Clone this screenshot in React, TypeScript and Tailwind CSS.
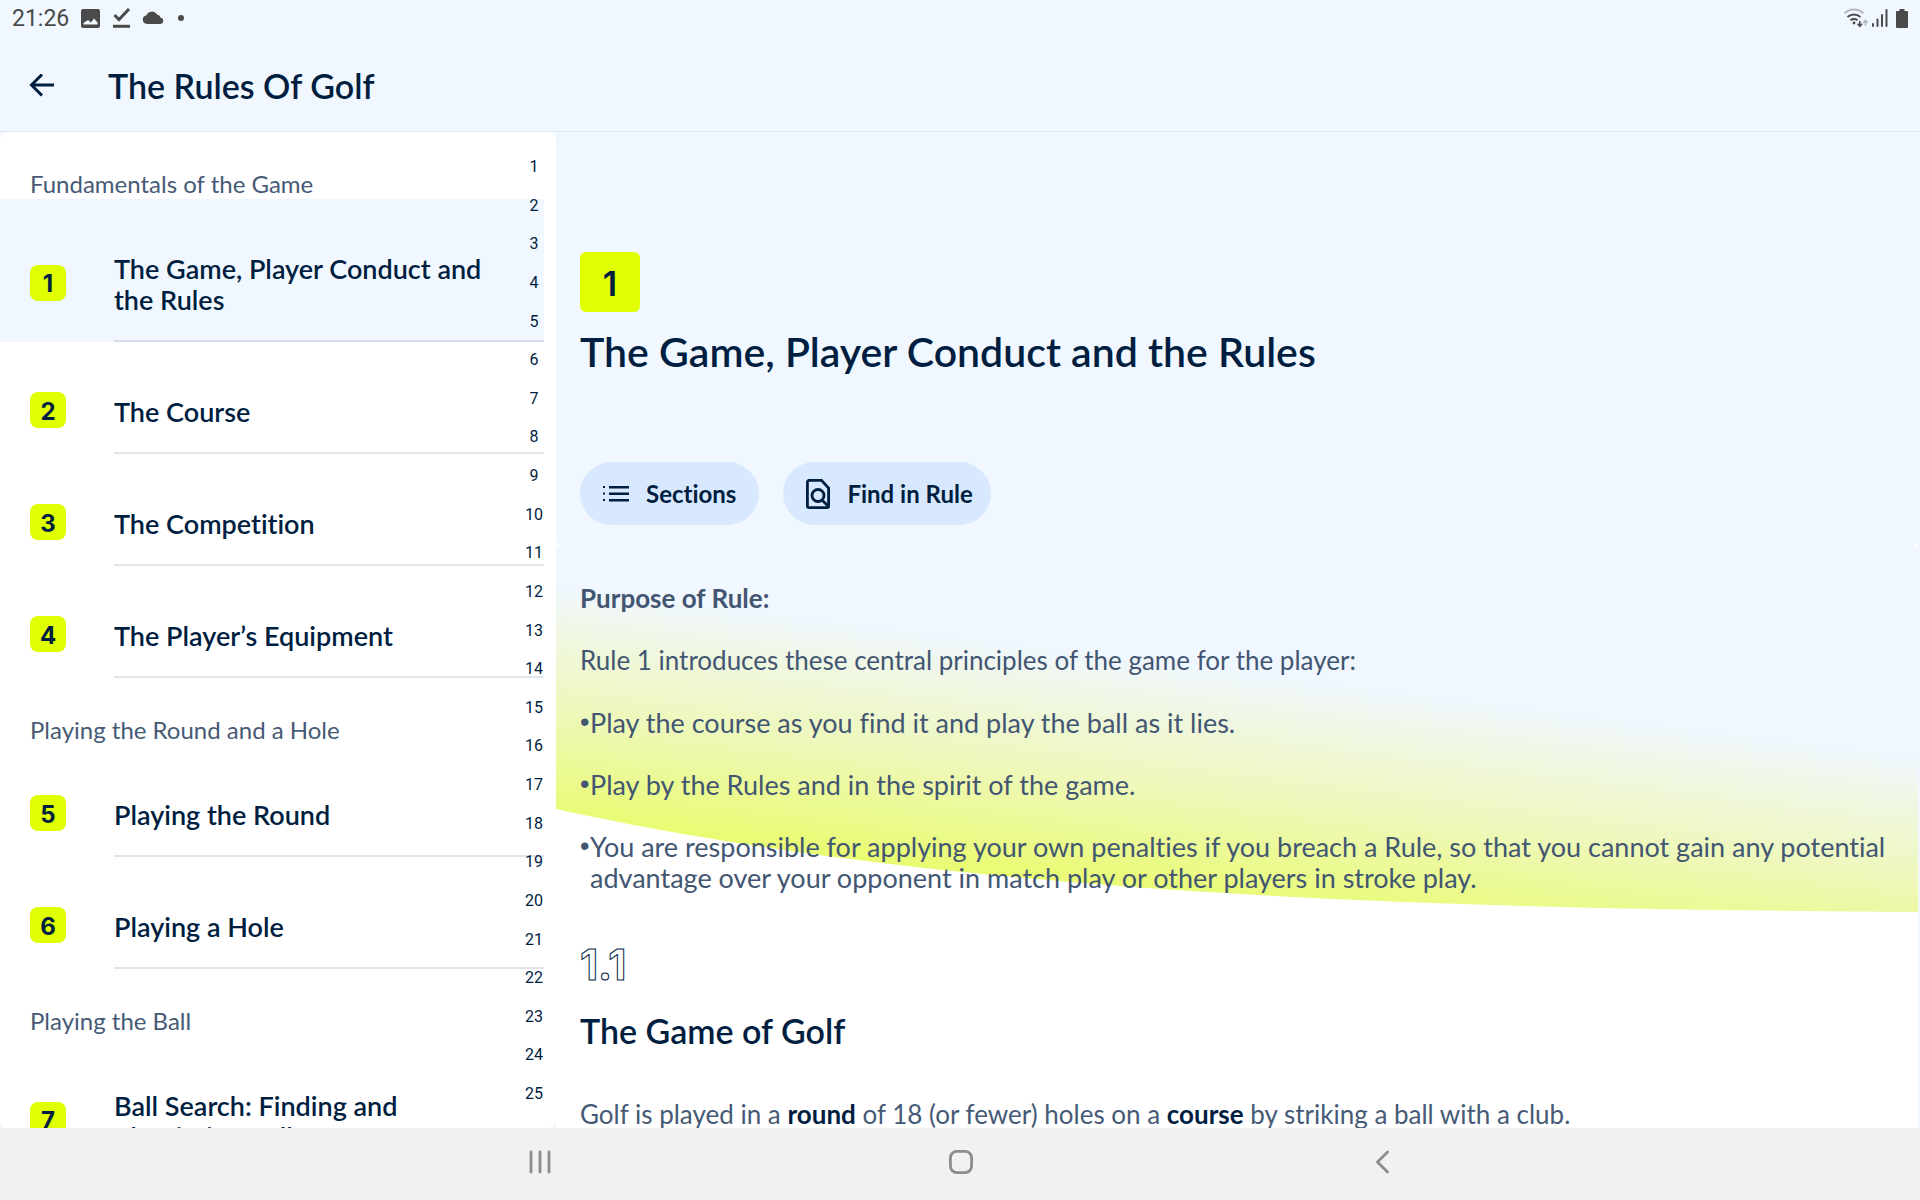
import React from 'react';

type Rule = { no: number; title: string };
type Group = { heading: string; rules: Rule[] };

const groups: Group[] = [
  {
    heading: 'Fundamentals of the Game',
    rules: [
      { no: 1, title: 'The Game, Player Conduct and the Rules' },
      { no: 2, title: 'The Course' },
      { no: 3, title: 'The Competition' },
      { no: 4, title: 'The Player’s Equipment' },
    ],
  },
  {
    heading: 'Playing the Round and a Hole',
    rules: [
      { no: 5, title: 'Playing the Round' },
      { no: 6, title: 'Playing a Hole' },
    ],
  },
  {
    heading: 'Playing the Ball',
    rules: [{ no: 7, title: 'Ball Search: Finding and Identifying Ball' }],
  },
];

const ruleNumbers = Array.from({ length: 25 }, (_, i) => i + 1);

const principles = [
  'Play the course as you find it and play the ball as it lies.',
  'Play by the Rules and in the spirit of the game.',
  'You are responsible for applying your own penalties if you breach a Rule, so that you cannot gain any potential advantage over your opponent in match play or other players in stroke play.',
];

const StatusBar: React.FC = () => (
  <div className="flex h-9 shrink-0 items-center justify-between px-3 text-[#4a4a4a]">
    <div className="flex items-center">
      <span className="pt-0.5 font-[Roboto,sans-serif] text-[23px] leading-7">21:26</span>
      <svg className="ml-3 h-[19px] w-[19px]" viewBox="0 0 19 19" fill="currentColor">
        <path fillRule="evenodd" d="M2 0h15a2 2 0 0 1 2 2v15a2 2 0 0 1-2 2H2a2 2 0 0 1-2-2V2a2 2 0 0 1 2-2Zm.5 15.500h14v-2l-3.500-4-3 4-3-2.500-4.500 3Z" />
      </svg>
      <svg className="ml-[13px] h-5 w-[18px]" viewBox="0 0 18 20" fill="none" stroke="currentColor">
        <path d="M1.500 7 6 11.500 16 1" strokeWidth="3" />
        <path d="M0 18.300h17" strokeWidth="3" />
      </svg>
      <svg className="ml-[11px] h-[14px] w-[22px]" viewBox="0 0 22 14" fill="currentColor">
        <path d="M5 13a4.300 4.300 0 0 1-.8-8.500A6.200 6.200 0 0 1 15.200 3.500 4.500 4.500 0 0 1 18.500 6.500 3.300 3.300 0 0 1 18.500 13Z" />
      </svg>
      <span className="ml-[14px] h-[6px] w-[6px] rounded-full bg-[#4a4a4a]" />
    </div>
    <div className="flex items-center">
      <svg className="h-5 w-6" viewBox="0 0 24 20" fill="none" stroke="currentColor" strokeWidth="2">
        <path d="M.7 5.200a13.500 13.500 0 0 1 18.600 0" stroke="#b4b8be" />
        <path d="M3.500 9a10 10 0 0 1 13 0" />
        <path d="M6.500 12.300a6 6 0 0 1 7 0" />
        <circle cx="10" cy="15" r="1.400" fill="currentColor" stroke="none" />
        <path d="M15.800 13v5M13.500 15.800l2.300 2.500 2.300-2.500" strokeWidth="1.600" />
        <path d="M21.500 18v-5M19.200 15l2.300-2.500 2.300 2.500" stroke="#b4b8be" strokeWidth="1.600" />
      </svg>
      <svg className="ml-1 h-[18px] w-4" viewBox="0 0 16 18" fill="currentColor">
        <rect x="0" y="14" width="2" height="4" rx="1" />
        <rect x="4.500" y="9.500" width="2" height="8.500" rx="1" />
        <rect x="9" y="5" width="2" height="13" rx="1" />
        <rect x="13.500" y="0" width="2" height="18" rx="1" />
      </svg>
      <svg className="ml-2 h-[19px] w-3" viewBox="0 0 12 19" fill="currentColor">
        <path d="M3.500 0h5v2H11a1 1 0 0 1 1 1v15a1 1 0 0 1-1 1H1a1 1 0 0 1-1-1V3a1 1 0 0 1 1-1h2.500Z" />
      </svg>
    </div>
  </div>
);

const TopBar: React.FC = () => (
  <header className="flex h-24 shrink-0 items-center border-b border-[#e1eaf4] pl-[29px] pt-1">
    <button type="button" aria-label="Back" className="flex h-12 w-[79px] items-center">
      <svg className="h-6 w-[26px]" viewBox="0 0 26 24" fill="none" stroke="#001e3f" strokeWidth="3">
        <path d="M2.500 11H25M13 .5 2.500 11 13 21.500" />
      </svg>
    </button>
    <h1 className="text-[34px] font-semibold leading-10">The Rules Of Golf</h1>
  </header>
);

const RuleRow: React.FC<{ rule: Rule; active: boolean }> = ({ rule, active }) => (
  <li>
    <a href={`#rule-${rule.no}`} className={`flex pl-[30px] ${active ? 'bg-[#f0f7ff]' : ''}`}>
      <span className="flex shrink-0 items-center pr-12 pt-6">
        <span className="flex h-9 w-9 items-center justify-center rounded-lg bg-[#e0ff00] pt-[3px] font-[Inter,sans-serif] text-[24px] font-bold leading-8">
          {rule.no}
        </span>
      </span>
      <span
        className={`flex-1 border-b-2 pb-[25px] pr-10 pt-[54px] text-[27px] font-semibold leading-[31px] ${
          active ? 'border-[#d3dce8]' : 'border-[#e1e4ea]'
        }`}
      >
        {rule.title}
      </span>
    </a>
  </li>
);

const Sidebar: React.FC = () => (
  <aside className="relative w-[556px] shrink-0 overflow-hidden rounded-lg bg-white">
    <div className="pr-3">
      {groups.map((group) => (
        <section key={group.heading}>
          <h2 className="pl-[30px] pt-[37px] text-[24px] leading-[30px] text-[#465a76]">{group.heading}</h2>
          <ul>
            {group.rules.map((rule) => (
              <RuleRow key={rule.no} rule={rule} active={rule.no === 1} />
            ))}
          </ul>
        </section>
      ))}
    </div>

    {/* quick index floating over the list */}
    <nav
      aria-label="Rule index"
      className="absolute bottom-6 right-3 top-[25px] flex w-5 flex-col justify-between text-center font-[Roboto,sans-serif] text-[16px] leading-5"
    >
      {ruleNumbers.map((n) => (
        <a key={n} href={`#rule-${n}`}>
          {n}
        </a>
      ))}
    </nav>
  </aside>
);

const RuleHeader: React.FC = () => (
  <div className="rounded-b-lg bg-[#f0f7ff] px-6 pb-[22px] pt-[120px]">
    <div className="flex h-[60px] w-[60px] items-center justify-center rounded-md bg-[#e0ff00] pt-[3px] font-[Inter,sans-serif] text-[34px] font-semibold leading-10">
      1
    </div>
    <h2 className="mt-4 text-[41px] font-semibold leading-[48px]">The Game, Player Conduct and the Rules</h2>
    <div className="mt-[86px] flex gap-6">
      <button type="button" className="flex h-[63px] items-center rounded-full bg-[#d8e8ff] px-[23px] text-[24px] font-bold leading-8">
        <svg className="mr-[17px] h-4 w-[26px]" viewBox="0 0 26 16" fill="#001e3f">
          <path d="M0 0h2v2H0zM0 6.500h2v2H0zM0 13h2v2H0zM6 0h20v2.500H6zM6 6.500h20V9H6zM6 13h20v2.500H6z" />
        </svg>
        Sections
      </button>
      <button type="button" className="flex h-[63px] items-center rounded-full bg-[#d8e8ff] pl-[23px] pr-[18px] text-[24px] font-bold leading-8">
        <svg className="mr-[17px] h-[30px] w-6" viewBox="0 0 24 30" fill="none" stroke="#001e3f" strokeWidth="2.800">
          <path d="M3 1.400h12.500L22.600 9v18a1.600 1.600 0 0 1-1.600 1.600H3A1.600 1.600 0 0 1 1.400 27V3A1.600 1.600 0 0 1 3 1.400Z" />
          <circle cx="12" cy="16.500" r="6" />
          <path d="m16 21 6 6" />
        </svg>
        Find in Rule
      </button>
    </div>
  </div>
);

const PurposePanel: React.FC = () => (
  <div className="relative px-6 pt-9 text-[26px] leading-[31px] text-[#425672]">
    {/* pale blue to lime sweep with a curved lower edge */}
    <svg className="absolute left-0 top-0 h-[365px] w-full" viewBox="0 0 1362 365" preserveAspectRatio="none">
      <defs>
        <linearGradient id="sweep" gradientUnits="userSpaceOnUse" x1="0" y1="38" x2="-32" y2="294">
          <stop offset="0" stopColor="#f0f7ff" />
          <stop offset="0.150" stopColor="#f0f7e8" />
          <stop offset="0.500" stopColor="#eef8b8" />
          <stop offset="1" stopColor="#e8fc60" />
        </linearGradient>
      </defs>
      <path d="M0 0H1362V365C900 362 400 350 0 262Z" fill="url(#sweep)" />
    </svg>
    <div className="relative">
      <p className="font-bold">Purpose of Rule:</p>
      <p className="mt-[31px]">Rule 1 introduces these central principles of the game for the player:</p>
      <ul className="text-[27px]">
        {principles.map((text) => (
          <li key={text} className="mt-[31px] flex">
            <span className="w-[10px] shrink-0 font-['Liberation_Sans',sans-serif]">•</span>
            <span>{text}</span>
          </li>
        ))}
      </ul>
    </div>
  </div>
);

const RuleContent: React.FC = () => (
  <main className="min-w-0 flex-1 overflow-hidden pr-0.5">
    <div className="min-h-full bg-white">
      <RuleHeader />
      <PurposePanel />
      <section className="px-6 pt-[46px]">
        <p className="font-[Inter,sans-serif] text-[42px] font-bold leading-[52px] text-transparent [-webkit-text-stroke:1px_#001e3f]">
          1.1
        </p>
        <h3 className="mt-5 text-[34px] font-semibold leading-10">The Game of Golf</h3>
        <p className="mt-12 text-[26px] leading-[31px] text-[#465a76]">
          Golf is played in a <b className="text-[#001e3f]">round</b> of 18 (or fewer) holes on a{' '}
          <b className="text-[#001e3f]">course</b> by striking a ball with a club.
        </p>
      </section>
    </div>
  </main>
);

const NavigationBar: React.FC = () => (
  <nav aria-label="System" className="flex h-[72px] shrink-0 items-center justify-center bg-[#f1f1f1] pb-1 pl-[3px] text-[#8c8c8c]">
    <div className="flex w-[66%] items-center">
      <button type="button" aria-label="Recent apps" className="flex h-12 flex-1 items-center justify-center">
        <svg className="h-6 w-6" viewBox="0 0 24 24" fill="none" stroke="currentColor" strokeWidth="2.800" strokeLinecap="round">
          <path d="M3 2v20M12 2v20M21 2v20" />
        </svg>
      </button>
      <button type="button" aria-label="Home" className="flex h-12 flex-1 items-center justify-center">
        <svg className="h-6 w-6" viewBox="0 0 24 24" fill="none" stroke="currentColor" strokeWidth="2.800">
          <rect x="1.400" y="1.400" width="21.200" height="21.200" rx="6.500" />
        </svg>
      </button>
      <button type="button" aria-label="Back" className="flex h-12 flex-1 items-center justify-center">
        <svg className="h-6 w-6" viewBox="0 0 24 24" fill="none" stroke="currentColor" strokeWidth="2.800" strokeLinecap="round">
          <path d="M16.500 2 6.500 12l10 10" />
        </svg>
      </button>
    </div>
  </nav>
);

const App: React.FC = () => {
  return (
    <div className="flex h-screen flex-col bg-[#f0f7ff] font-[Lato,sans-serif] text-[#001e3f] [font-variant-ligatures:no-common-ligatures]">
      <StatusBar />
      <TopBar />
      <div className="flex min-h-0 flex-1">
        <Sidebar />
        <RuleContent />
      </div>
      <NavigationBar />
    </div>
  );
};

export default App;
